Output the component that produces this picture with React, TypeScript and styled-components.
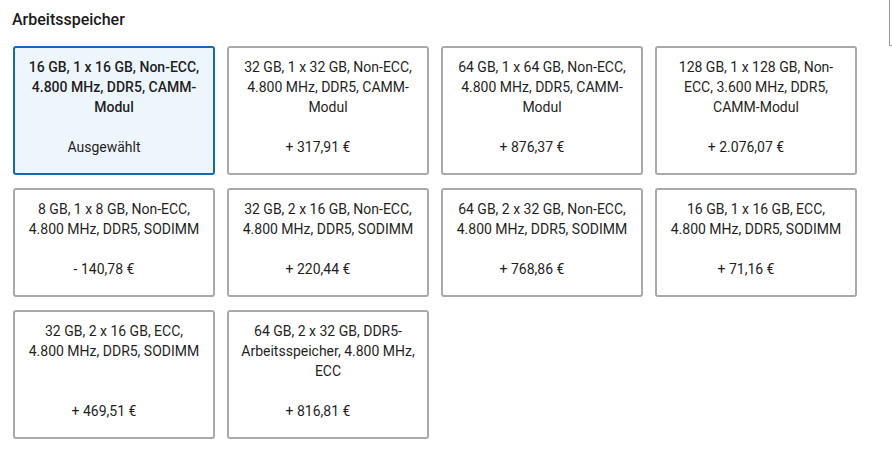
import React from "react";
import styled, { createGlobalStyle } from "styled-components";

const GlobalStyle = createGlobalStyle`
  html, body {
    margin: 0;
    padding: 0;
    background: #fff;
  }

  body {
    font-family: Roboto, "Liberation Sans", Arial, sans-serif;
    color: #212121;
  }
`;

const Section = styled.section`
  padding: 10px 13px;
  width: 844px;
`;

const Title = styled.h2`
  margin: 0 0 16px -1px;
  font-size: 16px;
  line-height: 20px;
  font-weight: 500;
  color: #1a1a1a;
`;

const Grid = styled.ul`
  list-style: none;
  margin: 0;
  padding: 0;
  display: grid;
  grid-template-columns: repeat(4, 202px);
  column-gap: 12px;
  row-gap: 13px;
`;

const Option = styled.li<{ $selected?: boolean }>`
  box-sizing: border-box;
  display: flex;
  flex-direction: column;
  align-items: center;
  padding: 9px 11.5px 16px;
  border: 2px solid ${(p) => (p.$selected ? "#1668b5" : "#a9a9a9")};
  border-radius: 3px;
  background: ${(p) => (p.$selected ? "#eef6fd" : "#fff")};
  text-align: center;
  font-size: 14px;
  line-height: 20px;
  cursor: pointer;
`;

const Label = styled.span<{ $selected?: boolean }>`
  display: block;
  margin-bottom: 20px;
  font-weight: ${(p) => (p.$selected ? 500 : 400)};
  color: #1f1f1f;
`;

const Price = styled.span`
  display: block;
  margin-top: auto;
  margin-right: 20px;
  color: #1f1f1f;
`;

const SidePanel = styled.div`
  position: fixed;
  top: -1px;
  left: 889px;
  width: 40px;
  height: 45px;
  border: 1px solid #9a9a9a;
  background: #fff;
`;

interface IMemoryOption {
  label: string;
  price: string;
  selected?: boolean;
}

const options: IMemoryOption[] = [
  { label: "16 GB, 1 x 16 GB, Non-ECC, 4.800 MHz, DDR5, CAMM-Modul", price: "Ausgewählt", selected: true },
  { label: "32 GB, 1 x 32 GB, Non-ECC, 4.800 MHz, DDR5, CAMM-Modul", price: "+ 317,91 €" },
  { label: "64 GB, 1 x 64 GB, Non-ECC, 4.800 MHz, DDR5, CAMM-Modul", price: "+ 876,37 €" },
  { label: "128 GB, 1 x 128 GB, Non-ECC, 3.600 MHz, DDR5, CAMM-Modul", price: "+ 2.076,07 €" },
  { label: "8 GB, 1 x 8 GB, Non-ECC, 4.800 MHz, DDR5, SODIMM", price: "- 140,78 €" },
  { label: "32 GB, 2 x 16 GB, Non-ECC, 4.800 MHz, DDR5, SODIMM", price: "+ 220,44 €" },
  { label: "64 GB, 2 x 32 GB, Non-ECC, 4.800 MHz, DDR5, SODIMM", price: "+ 768,86 €" },
  { label: "16 GB, 1 x 16 GB, ECC, 4.800 MHz, DDR5, SODIMM", price: "+ 71,16 €" },
  { label: "32 GB, 2 x 16 GB, ECC, 4.800 MHz, DDR5, SODIMM", price: "+ 469,51 €" },
  { label: "64 GB, 2 x 32 GB, DDR5-Arbeitsspeicher, 4.800 MHz, ECC", price: "+ 816,81 €" },
];

const App = () => {
  return (
    <>
      <GlobalStyle />
      <Section>
        <Title>Arbeitsspeicher</Title>
        <Grid>
          {options.map((option) => (
            <Option key={option.label} $selected={option.selected}>
              <Label $selected={option.selected}>{option.label}</Label>
              <Price>{option.price}</Price>
            </Option>
          ))}
        </Grid>
      </Section>
      <SidePanel />
    </>
  );
};

export default App;
